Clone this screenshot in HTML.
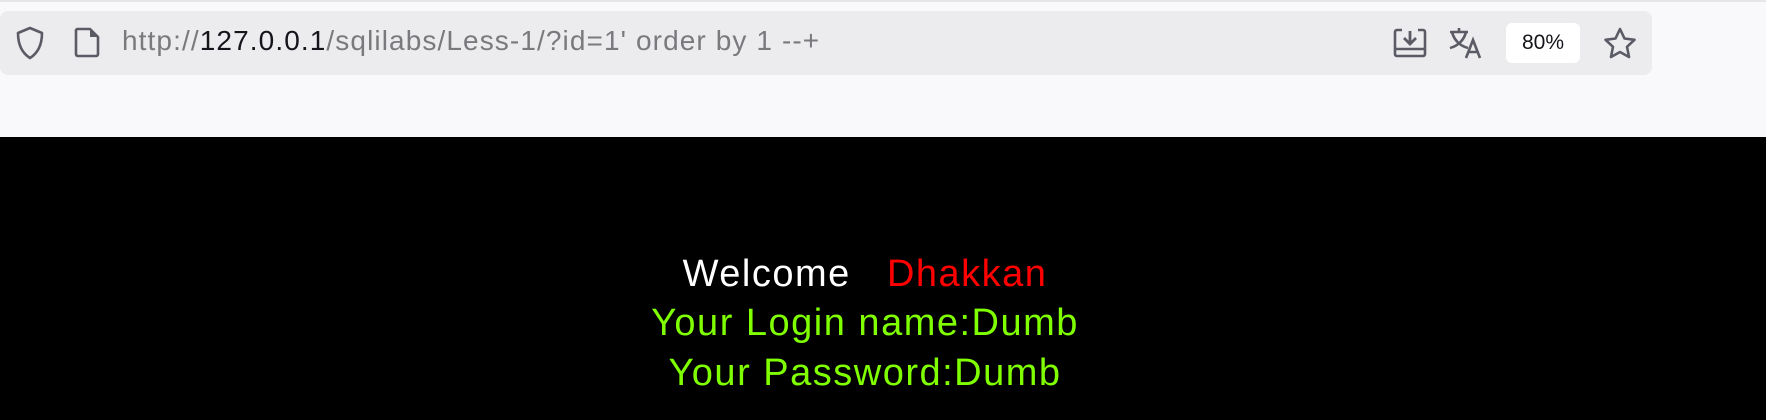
<!DOCTYPE html>
<html><head><meta charset="utf-8"><style>
body{margin:0;width:1766px;height:420px;overflow:hidden;background:#000;font-family:"Liberation Sans",sans-serif;}
#top{position:absolute;left:0;top:0;width:1766px;height:137px;background:#f9f9fb;border-top:2px solid #e6e6ea;box-sizing:border-box;}
#bar{position:absolute;left:0;top:9px;width:1652px;height:64px;background:#ececee;border-radius:8px;}
#url{position:absolute;left:122px;top:23px;font-size:28px;color:#7a7a7e;letter-spacing:1.1px;white-space:pre;}
#url b{font-weight:normal;color:#15141a;}
#zoom{position:absolute;left:1506px;top:21px;width:74px;height:40px;background:#fff;border-radius:6px;font-size:21px;line-height:40px;text-align:center;color:#15141a;}
svg{position:absolute;}
.t{position:absolute;left:-18px;width:1766px;text-align:center;font-size:38px;letter-spacing:1.5px;white-space:pre;}
</style></head><body>
<div id="top">
<div id="bar"></div>
<svg style="left:14px;top:23px" width="32" height="36" viewBox="0 0 32 36"><path d="M16 3 L28 8 C28 20 24 28 16 33 C8 28 4 20 4 8 Z" fill="none" stroke="#5b5b66" stroke-width="2.6" stroke-linejoin="round"/></svg>
<svg style="left:72px;top:23px" width="30" height="34" viewBox="0 0 30 34"><path d="M5 4 H18 L26 12 V29 A2 2 0 0 1 24 31 H6 A2 2 0 0 1 4 29 V5 Z" fill="none" stroke="#5b5b66" stroke-width="2.6" stroke-linejoin="round"/><path d="M18 4 V12 H26 Z" fill="#5b5b66"/></svg>
<div id="url">http://<b>127.0.0.1</b>/sqlilabs/Less-1/?id=1' order by 1 --+</div>
<svg style="left:1392px;top:25px" width="36" height="32" viewBox="0 0 36 32"><path d="M10 3 H5 A2 2 0 0 0 3 5 V27 A2 2 0 0 0 5 29 H31 A2 2 0 0 0 33 27 V5 A2 2 0 0 0 31 3 H26" fill="none" stroke="#5b5b66" stroke-width="2.6"/><path d="M3 22 H33" stroke="#5b5b66" stroke-width="2.6"/><path d="M18 4 V16 M12 11 L18 17 L24 11" fill="none" stroke="#5b5b66" stroke-width="2.8"/></svg>
<svg style="left:1448px;top:24px" width="38" height="34" viewBox="0 0 38 34"><path d="M2 6 H20 M11 2 V6 M4 6 C6 14 12 20 20 22 M18 6 C16 14 10 20 2 22" fill="none" stroke="#5b5b66" stroke-width="2.6"/><path d="M18 32 L25 14 L32 32 M20.5 26 H29.5" fill="none" stroke="#5b5b66" stroke-width="2.6"/></svg>
<div id="zoom">80%</div>
<svg style="left:1602px;top:24px" width="36" height="34" viewBox="0 0 36 34"><path d="M18 3 L22.5 12.5 L32.5 13.8 L25 20.8 L27 31 L18 26 L9 31 L11 20.8 L3.5 13.8 L13.5 12.5 Z" fill="none" stroke="#5b5b66" stroke-width="2.6" stroke-linejoin="round"/></svg>
</div>
<div class="t" style="top:253px"><span style="color:#fff">Welcome</span>   <span style="color:#f00">Dhakkan</span></div>
<div class="t" style="top:302px;color:#7fff00">Your Login name:Dumb</div>
<div class="t" style="top:352px;color:#7fff00">Your Password:Dumb</div>
</body></html>
